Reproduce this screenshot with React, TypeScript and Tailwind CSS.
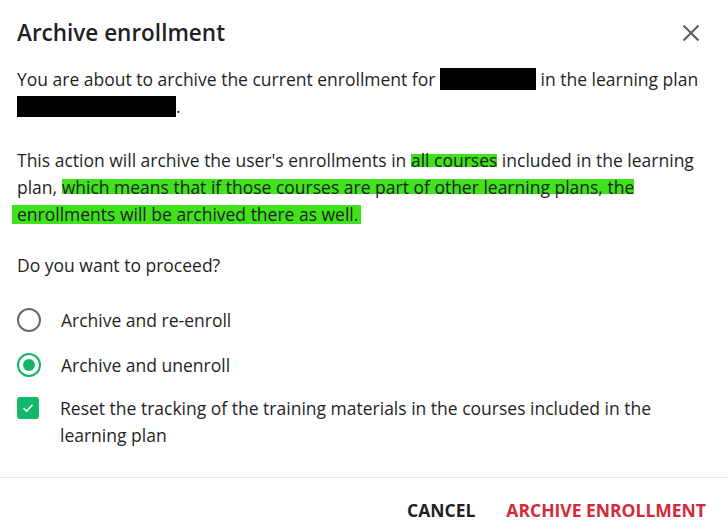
import React from 'react'

const hl = 'bg-[linear-gradient(#3fe21b,#3fe21b)] bg-no-repeat box-decoration-clone'

function Radio({ checked, label }: { checked?: boolean; label: string }) {
    return (
        <label className="flex items-center gap-[20px] h-[26px]">
            {checked ? (
                <span className="flex items-center justify-center w-[24px] h-[24px] rounded-full border-[2.5px] border-[#13b56b]">
                    <span className="w-[12px] h-[12px] rounded-full bg-[#13b56b]" />
                </span>
            ) : (
                <span className="w-[24px] h-[24px] rounded-full border-[2.5px] border-[#6b6b6b]" />
            )}
            <span>{label}</span>
        </label>
    )
}

export default function App() {
    return (
        <div className="w-[728px] h-[532px] bg-white text-[#1f1f26] flex flex-col" style={{ fontFamily: '"Open Sans", sans-serif' }}>
            <div className="flex items-center justify-between pl-[17px] pr-[28px] pt-[17px]">
                <h1 className="text-[22.5px] leading-[32px] font-semibold">Archive enrollment</h1>
                <svg width="18" height="18" viewBox="0 0 18 18" className="text-[#5c5c5c]">
                    <path d="M1.5 1.5 L16.5 16.5 M16.5 1.5 L1.5 16.5" stroke="currentColor" strokeWidth="2" />
                </svg>
            </div>

            <div className="pl-[17px] pr-[16px] text-[17.5px] leading-[27px] flex-1">
                <p className="mt-[17px]">
                    You are about to archive the current enrollment for{' '}
                    <span className="inline-block align-[-4px] w-[96px] h-[22px] bg-black" />{' '}
                    in the learning plan{' '}
                    <span className="inline-block align-[-4px] w-[159px] h-[21px] bg-black" />.
                </p>

                <p className="mt-[27px]">
                    This action will archive the user's enrollments in{' '}
                    <span className={`${hl} bg-[length:100%_13px] bg-[position:0_6px]`}>all courses</span>{' '}
                    included in the learning plan,{' '}
                    <span className={`${hl} bg-[length:100%_15px] bg-[position:0_4px]`}>
                        which means that if those courses are part of other learning plans, the
                    </span>{' '}
                    <span className={`${hl} bg-[length:100%_19px] bg-[position:0_3px] -ml-[5px] pl-[5px] pr-[3px]`}>
                        enrollments will be archived there as well.
                    </span>
                </p>

                <p className="mt-[24px]">Do you want to proceed?</p>

                <div className="mt-[28px] flex flex-col gap-[19px]">
                    <Radio label="Archive and re-enroll" />
                    <Radio checked label="Archive and unenroll" />
                </div>

                <div className="mt-[17px] flex items-start gap-[21px]">
                    <span className="mt-[2px] shrink-0 flex items-center justify-center w-[22px] h-[22px] rounded-[3px] bg-[#14b86c]">
                        <svg width="14" height="14" viewBox="0 0 14 14">
                            <path d="M2.5 7.2 L5.7 10.2 L11.5 3.8" fill="none" stroke="white" strokeWidth="1.6" />
                        </svg>
                    </span>
                    <span>Reset the tracking of the training materials in the courses included in the learning plan</span>
                </div>
            </div>

            <div className="border-t border-[#e3e3e3] h-[55px] pt-[11px] flex items-center justify-end gap-[31px] pr-[22px] text-[17.5px] font-bold">
                <button className="uppercase text-[#1f1f26]">Cancel</button>
                <button className="uppercase text-[#d42a3c]">Archive enrollment</button>
            </div>
        </div>
    )
}
